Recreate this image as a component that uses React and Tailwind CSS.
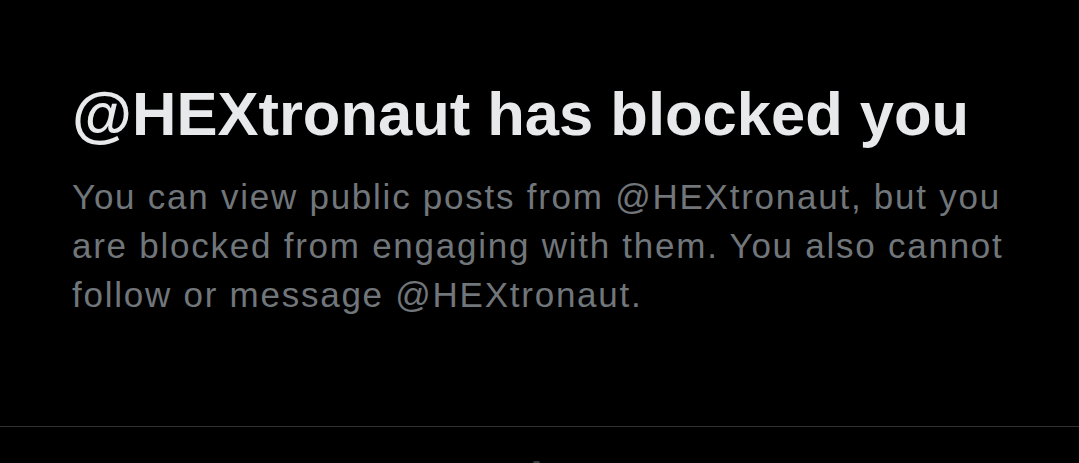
export default function App() {
  return (
    <div className="w-[1079px] h-[463px] bg-black overflow-hidden flex flex-col" style={{ fontFamily: '"Liberation Sans", Arial, sans-serif' }}>
      <div className="pl-[72px] pt-[78px] flex flex-col">
        <h1 className="text-[61.5px] leading-[72px] font-bold text-[#e7e9ea] whitespace-nowrap">@HEXtronaut has blocked you</h1>
        <div className="mt-[22px] text-[35px] leading-[49px] tracking-[1.75px] text-[#71767b] whitespace-nowrap">
          <div>You can view public posts from @HEXtronaut, but you</div>
          <div>are blocked from engaging with them. You also cannot</div>
          <div>follow or message @HEXtronaut.</div>
        </div>
      </div>
      <div className="mt-auto h-[37px] border-t border-[#2f3336] flex justify-center">
        <div className="mt-auto ml-[-7px] w-[7px] h-[2px] bg-[#3a3d40] rounded-t-sm"></div>
      </div>
    </div>
  );
}
